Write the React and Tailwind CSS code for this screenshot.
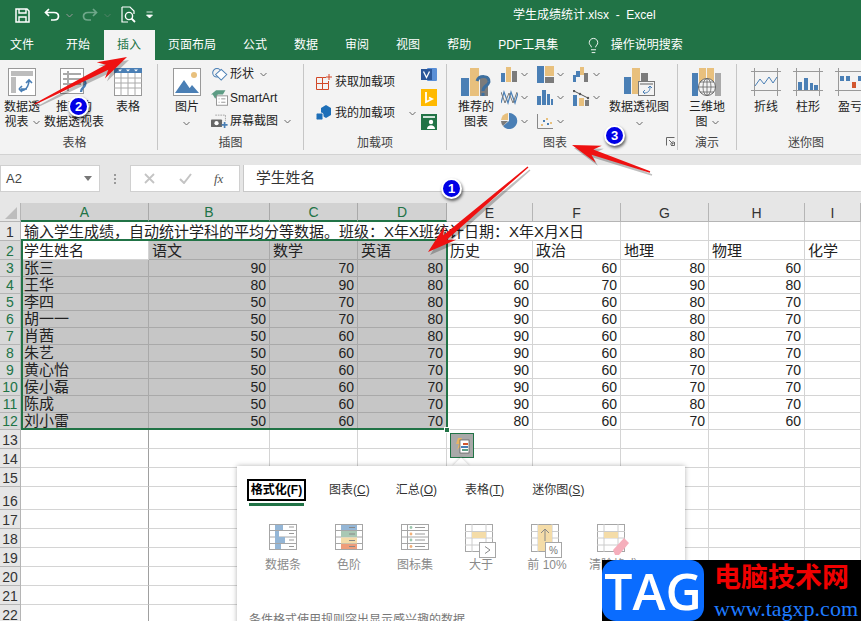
import { Lightbulb } from "lucide-react";

const BLUE = "#4a7fb5";
const TAN = "#e8c07d";
const GRAY = "#7b7b7b";
const LINE = "#a6a6a6";

const students = [
  ["张三", 90, 70, 80, 90, 60, 80, 60],
  ["王华", 80, 90, 80, 60, 70, 90, 80],
  ["李四", 50, 70, 80, 90, 60, 80, 70],
  ["胡一一", 50, 70, 80, 90, 60, 80, 70],
  ["肖茜", 50, 60, 80, 90, 60, 80, 70],
  ["朱艺", 50, 60, 70, 90, 60, 80, 70],
  ["黄心怡", 50, 60, 70, 90, 60, 70, 70],
  ["侯小磊", 50, 60, 70, 90, 60, 70, 70],
  ["陈成", 50, 60, 70, 90, 60, 80, 70],
  ["刘小雷", 50, 60, 70, 80, 60, 70, 60],
];

const Caret = ({ className = "" }) => (
  <svg width="7" height="5" viewBox="0 0 7 5" className={className}>
    <path d="M0.5 1 L3.5 4 L6.5 1" fill="none" stroke="#666" strokeWidth="1" />
  </svg>
);

const Svg = ({ w = 28, h = 28, vw, vh, children }) => (
  <svg width={w} height={h} viewBox={`0 0 ${vw || w} ${vh || h}`} className="shrink-0">
    {children}
  </svg>
);

/* ribbon icons */
const PivotIcon = () => (
  <Svg>
    <rect x="0.5" y="0.5" width="27" height="27" fill="#fff" stroke="#999" />
    <rect x="3" y="3" width="22" height="5" fill="#bdbdbd" />
    <rect x="3" y="9" width="5" height="16" fill="#bdbdbd" />
    <path d="M11 21 C14 24 20 22 21 13 M18 15 L21 12 L24 15 M19 21 L13 21 M11 21 L14 18 M11 21 L14 24" fill="none" stroke={BLUE} strokeWidth="1.6" />
  </Svg>
);
const RecPivotIcon = () => (
  <Svg>
    <rect x="0.5" y="0.5" width="23" height="25" fill="#fff" stroke="#999" />
    <path d="M3 6 H21 M3 11 H21 M3 16 H21 M8 3 V23" stroke="#aaa" strokeWidth="2" />
    <path d="M18 15 C22 10 27 13 25 17 C24 20 21 20 21 24" fill="none" stroke={BLUE} strokeWidth="2.4" />
  </Svg>
);
const TableIcon = () => (
  <Svg>
    <rect x="0.5" y="0.5" width="27" height="27" fill="#fff" stroke="#999" />
    <rect x="0" y="0" width="28" height="5" fill={BLUE} />
    <path d="M4 1.5 H8 L6 3.5 Z M12 1.5 H16 L14 3.5 Z M20 1.5 H24 L22 3.5 Z" fill="#fff" />
    <path d="M0 10 H28 M0 15 H28 M0 20 H28 M7 5 V28 M14 5 V28 M21 5 V28" stroke="#aaa" />
  </Svg>
);
const PictureIcon = () => (
  <Svg>
    <rect x="0.5" y="0.5" width="27" height="27" fill="#fff" stroke="#999" />
    <circle cx="21" cy="7" r="3" fill={TAN} />
    <path d="M2 25 L11 12 L20 25 Z M13 25 L19 17 L26 25 Z" fill={BLUE} />
  </Svg>
);
const ShapesIcon = () => (
  <Svg w={17} h={15} vw={20} vh={16}>
    <circle cx="7" cy="6" r="5" fill="none" stroke={BLUE} strokeWidth="1.2" />
    <path d="M12 2 L18.5 8 L12 14.5 L5.5 8 Z" fill="#fff" stroke={BLUE} strokeWidth="1.2" />
  </Svg>
);
const SmartArtIcon = () => (
  <Svg w={17} h={16} vw={20} vh={18}>
    <path d="M0 5 L6 0 H17 L14 5 Z M2 5 H8 L5 10 Z" fill="#5d9c84" />
    <rect x="6.5" y="6.5" width="13" height="11" fill="#fff" stroke="#888" />
    <path d="M9 10 H10 M12 10 H17 M9 14 H10 M12 14 H17" stroke="#888" />
  </Svg>
);
const ScreenshotIcon = () => (
  <Svg w={17} h={15} vw={20} vh={17}>
    <path d="M5 1 H17 V8" fill="none" stroke="#999" strokeDasharray="2 1" />
    <rect x="0" y="6" width="13" height="9" rx="1" fill="#666" />
    <circle cx="6.5" cy="10.5" r="2.5" fill="#fff" />
    <path d="M16 9 V16 M12.5 12.5 H19.5" stroke={BLUE} strokeWidth="2" />
  </Svg>
);
const StoreIcon = () => (
  <Svg w={16} h={16}>
    <path d="M0.5 3.5 H6.5 V9.5 H0.5 Z M6.5 9.5 H12.5 V15.5 H6.5 Z M0.5 9.5 H6.5 V15.5 H0.5 Z M6.5 3.5 H10 M12.5 7 V9.5" fill="none" stroke="#d24726" />
    <path d="M13 0 V6 M10 3 H16" stroke="#d24726" />
  </Svg>
);
const AddinIcon = () => (
  <Svg w={16} h={16}>
    <path d="M5 3 L10 0 L15 3 V10 L10 13 L5 10 Z" fill="#1e6fb8" />
    <rect x="0" y="8" width="7" height="7" rx="1.5" fill="#1e6fb8" stroke="#f3f3f3" />
  </Svg>
);
const VisioIcon = () => (
  <Svg w={16} h={13}>
    <rect x="6" y="0" width="10" height="13" rx="1" fill="#5a8fd6" />
    <rect x="0" y="1" width="11" height="11" fill="#2b579a" />
    <path d="M2.5 3.5 L5.5 9.5 L8.5 3.5" fill="none" stroke="#fff" strokeWidth="1.3" />
  </Svg>
);
const BingIcon = () => (
  <Svg w={16} h={17}>
    <rect width="16" height="17" fill="#ffb900" />
    <path d="M5 3 V13 L11 10 L8 8.5" fill="none" stroke="#fff" strokeWidth="1.8" />
  </Svg>
);
const PeopleIcon = () => (
  <Svg w={16} h={16}>
    <rect width="16" height="16" fill="#217346" />
    <rect x="2" y="2" width="12" height="2" fill="#cfe5da" />
    <circle cx="10" cy="8" r="2.2" fill="#fff" />
    <path d="M6 15 C6 10 14 10 14 15 Z" fill="#fff" />
  </Svg>
);
const ClusterIcon = ({ help, w = 30, h = 28 }) => (
  <Svg w={w} h={h}>
    <rect x="0" y="10" width="8" height="18" fill={BLUE} />
    <rect x="9" y="0" width="9" height="28" fill={TAN} />
    <rect x="19" y="8" width="8" height="20" fill={GRAY} />
    {help ? (
      <path d="M16 13 C18 7 29 7 28 14 C27 18 22 18 22 23 M22 25 V28" fill="none" stroke="#3d6f9f" strokeWidth="3" />
    ) : null}
  </Svg>
);
const PivotChartIcon = () => (
  <Svg w={31} h={28}>
    <rect x="0" y="9" width="7" height="17" fill={BLUE} />
    <rect x="8" y="0" width="8" height="26" fill={TAN} />
    <rect x="17" y="5" width="7" height="21" fill={GRAY} />
    <rect x="14.5" y="13.5" width="16" height="14" fill="#f3f3f3" stroke="#777" />
    <rect x="16" y="15" width="13" height="2" fill="#aaa" />
    <path d="M20 25 C24 25 26 23 26 19 M24 20 L26 18 L28 20 M19 24 L21 22 M19 24 L21 26" fill="none" stroke={BLUE} />
  </Svg>
);
const GlobeIcon = () => (
  <Svg w={30} h={28}>
    <rect x="0" y="5" width="6" height="23" fill={BLUE} />
    <rect x="7" y="0" width="7" height="20" fill={TAN} />
    <rect x="15" y="0" width="7" height="20" fill={TAN} />
    <rect x="23" y="5" width="6" height="23" fill="#a9a9a9" />
    <circle cx="15" cy="19" r="8.5" fill="#f3f3f3" stroke="#666" />
    <path d="M6.5 19 H23.5 M8 14 H22 M8 24 H22 M15 10.5 V27.5" stroke="#666" strokeWidth="0.8" />
    <ellipse cx="15" cy="19" rx="4" ry="8.5" fill="none" stroke="#666" strokeWidth="0.8" />
  </Svg>
);
const ColumnsSmall = () => (
  <Svg w={17} h={15}>
    <rect x="0" y="6" width="4" height="9" fill={BLUE} />
    <rect x="5" y="0" width="5" height="15" fill={TAN} />
    <rect x="11" y="4" width="5" height="11" fill={GRAY} />
  </Svg>
);
const LinesSmall = () => (
  <Svg w={17} h={15}>
    <path d="M0 13 L3 2 L7 13 L10 2 L14 13 L17 3" fill="none" stroke={BLUE} strokeWidth="1.2" />
    <path d="M0 2 L4 13 L8 3 L12 13 L16 2" fill="none" stroke={GRAY} strokeWidth="1" />
  </Svg>
);
const PieSmall = () => (
  <Svg w={17} h={16}>
    <path d="M8 8 L8 0 A8 8 0 1 1 2 13 Z" fill={BLUE} />
    <path d="M7 7 L7 0 A7.5 7.5 0 0 0 0 7 Z" fill={TAN} />
    <path d="M7 8 L0 8 A8 8 0 0 0 2 13 Z" fill={GRAY} />
  </Svg>
);
const TreemapSmall = () => (
  <Svg w={17} h={17}>
    <rect width="7" height="17" fill={BLUE} />
    <rect x="8" width="9" height="10" fill={TAN} />
    <rect x="8" y="11" width="9" height="6" fill={GRAY} />
  </Svg>
);
const BarsSmall = () => (
  <Svg w={16} h={15}>
    <rect x="0" y="6" width="4" height="9" fill={BLUE} />
    <rect x="5" y="0" width="4" height="15" fill={BLUE} />
    <rect x="10" y="4" width="3" height="11" fill={BLUE} />
    <rect x="14" y="9" width="2" height="6" fill={BLUE} />
  </Svg>
);
const ScatterSmall = () => (
  <Svg w={16} h={15}>
    <path d="M0.5 0 V14.5 H16" fill="none" stroke="#888" />
    <path d="M4 10 h2 v2 h-2 Z M9 4 h2 v2 h-2 Z M13 8 h2 v2 h-2 Z" fill={TAN} />
    <path d="M6 6 h2 v2 h-2 Z M10 9 h2 v2 h-2 Z" fill={BLUE} />
  </Svg>
);
const WaterfallSmall = () => (
  <Svg w={16} h={15}>
    <rect x="0" y="8" width="3" height="7" fill={BLUE} />
    <rect x="3" y="4" width="4" height="6" fill={BLUE} />
    <rect x="7" y="0" width="4" height="8" fill={TAN} />
    <rect x="11" y="6" width="4" height="9" fill={GRAY} />
  </Svg>
);
const ComboSmall = () => (
  <Svg w={17} h={16}>
    <rect x="0" y="5" width="4" height="11" fill={BLUE} />
    <rect x="6" y="8" width="5" height="8" fill={TAN} />
    <rect x="12" y="10" width="4" height="6" fill={GRAY} />
    <path d="M1 1 L7 4 L15 8" fill="none" stroke="#555" />
    <circle cx="1" cy="1" r="1.2" fill="#555" />
    <circle cx="7" cy="4" r="1.2" fill="#555" />
    <circle cx="15" cy="8" r="1.2" fill="#555" />
  </Svg>
);
const SparkFrame = ({ children }) => (
  <Svg w={30} h={28}>
    <path d="M0 3.5 H30 M0 22.5 H30 M3.5 0 V28 M26.5 0 V28" stroke="#999" />
    {children}
  </Svg>
);

/* quick analysis icons, all greyed out */
const PopGrid = ({ w = 28, h = 26, lines = "M0 6.5 H28 M0 13 H28 M0 19.5 H28", children }) => (
  <svg width={w} height={h} viewBox={`0 0 ${w} ${h}`}>
    <rect x="0.5" y="0.5" width="27" height="25" fill="#fff" stroke={LINE} />
    <path d={lines} stroke={LINE} />
    {children}
  </svg>
);
const dashes = "M20 3 H25 M20 9.5 H25 M20 16 H25 M20 22.5 H25";
const popIcons = [
  <PopGrid key="bar">
    <path d="M6 1 H14 V6 H6 Z M6 7 H10 V13 H6 Z M6 13 H16 V19 H6 Z M6 20 H12 V25 H6 Z" fill="#94b6d6" />
    <path d={dashes} stroke="#999" />
  </PopGrid>,
  <PopGrid key="scale">
    <rect x="6" y="1" width="16" height="5" fill="#94b6d6" />
    <rect x="6" y="7" width="16" height="6" fill="#a9c8b4" />
    <rect x="6" y="13.5" width="16" height="6" fill="#f4dca8" />
    <rect x="6" y="20" width="16" height="5" fill="#ee9d7a" />
    <path d="M14 3.5 H20 M14 10 H20 M14 16.5 H20 M14 22.5 H20" stroke="#888" />
  </PopGrid>,
  <PopGrid key="set" lines="M0 6.5 H28 M0 13 H28 M0 19.5 H28 M6.5 0 V26">
    <circle cx="10" cy="3.5" r="1.4" fill="#9cc7ad" />
    <circle cx="10" cy="10" r="1.4" fill="#f2b078" />
    <circle cx="10" cy="16" r="1.4" fill="#9cc7ad" />
    <circle cx="10" cy="22.5" r="1.4" fill="#f2b078" />
    <path d="M14 3.5 H24 M14 10 H24 M14 16 H24 M14 22.5 H24" stroke="#999" />
  </PopGrid>,
];
const CalloutGrid = ({ children }) => (
  <svg width="32" height="36" viewBox="0 0 32 36" className="-mb-2.5">
    <rect x="0.5" y="0.5" width="27" height="27" fill="#fff" stroke={LINE} />
    <path d="M0 7.5 H28 M0 14 H28 M0 21 H28 M7 0 V28 M21 0 V28" stroke="#ccc" />
    {children}
  </svg>
);

const Big = ({ w, icon, lines, caret, className = "" }) => (
  <div className={`flex shrink-0 flex-col items-center pt-1 ${w} ${className}`}>
    <div className="flex h-7 items-center">{icon}</div>
    <div className="mt-[4px] flex flex-col items-center whitespace-nowrap leading-[15px]">
      {lines.map((l, i) => (
        <span key={l} className="flex items-center gap-1">
          {l}
          {caret && lines.length > 1 && i === lines.length - 1 ? <Caret /> : null}
        </span>
      ))}
      {caret && lines.length === 1 ? <Caret className="mt-1.5" /> : null}
    </div>
  </div>
);

const SmallChart = ({ icon }) => (
  <div className="flex h-5 w-9 items-center">
    <div className="flex w-[20px] shrink-0 items-center">{icon}</div>
    <Caret />
  </div>
);

const Group = ({ w, label, labelClass = "", border = true, children, launcher }) => (
  <div className={`my-1 flex shrink-0 flex-col ${w} ${border ? "border-r border-[#c6c6c6]" : ""}`}>
    <div className="flex flex-1">{children}</div>
    <div className={`relative h-3.5 text-center leading-[14px] text-[#444] ${labelClass}`}>
      {label}
      {launcher ? (
        <svg width="9" height="9" viewBox="0 0 9 9" className="absolute right-[2px] top-[1px]">
          <path d="M0.5 8.5 V0.5 H8.5 M3 3 L7 7 M7 4 V7 H4 M8.5 5 V8.5 H5" fill="none" stroke="#666" />
        </svg>
      ) : null}
    </div>
  </div>
);

const SelCell = ({ children }) => (
  <div className="flex items-end justify-end overflow-hidden border-r border-b border-[#a9a9a9] bg-[#c6c6c6] pr-[3px] text-[14px] leading-[16px]">
    {children}
  </div>
);
const NumCell = ({ children }) => (
  <div className="flex items-end justify-end overflow-hidden border-r border-b border-[#d4d4d4] pr-[3px] text-[14px] leading-[16px]">
    {children}
  </div>
);
const TextCell = ({ sel, children }) => (
  <div className={`flex items-end overflow-hidden whitespace-nowrap border-r border-b pl-[3px] text-[15px] leading-[16px] ${sel ? "border-[#a9a9a9] bg-[#c6c6c6]" : "border-[#d4d4d4]"}`}>
    {children}
  </div>
);
const Blank = ({ first }) => (
  <div className={`border-r border-b border-[#d4d4d4] ${first ? "border-r-[#a0a0a0]" : ""}`} />
);
const RowHead = ({ n, sel, h }) => (
  <div className={`flex items-end justify-center border-r border-b border-[#b5b5b5] text-[14px] leading-[16px] ${h} ${sel ? "bg-[#d8d8d8] text-[#217346]" : "bg-[#e6e6e6] text-[#333]"}`}>
    {n}
  </div>
);
const ColHead = ({ n, sel }) => (
  <div className={`flex h-[19px] items-end justify-center border-r text-[14px] leading-[15px] ${sel ? "border-b-2 border-r-[#a9a9a9] border-b-[#217346] bg-[#d2d2d2] text-[#217346]" : "border-b border-r-[#b5b5b5] border-b-[#b5b5b5] bg-[#e6e6e6] text-[#333]"}`}>
    {n}
  </div>
);

const Badge = ({ n, className }) => (
  <div className={`absolute flex h-[21px] w-[21px] items-center justify-center rounded-full border-2 border-white bg-[#0000e6] text-[13px] font-bold text-white shadow-[1px_2px_3px_rgba(0,0,0,0.6)] ${className}`}>
    {n}
  </div>
);

// tapered arrow, thin at the tail
const arrowPoints = (x1, y1, x2, y2, len, wing) => {
  const d = Math.hypot(x2 - x1, y2 - y1);
  const ux = (x2 - x1) / d;
  const uy = (y2 - y1) / d;
  const nx = -uy;
  const ny = ux;
  const p = (along, side) => `${x2 - ux * along + nx * side},${y2 - uy * along + ny * side}`;
  return [
    `${x1 + nx * 0.7},${y1 + ny * 0.7}`,
    p(len * 0.8, 2.8),
    p(len * 1.05, wing),
    `${x2},${y2}`,
    p(len * 1.05, -wing),
    p(len * 0.8, -2.8),
    `${x1 - nx * 0.7},${y1 - ny * 0.7}`,
  ].join(" ");
};

const Arrows = () => (
  <svg width="861" height="621" viewBox="0 0 861 621" className="pointer-events-none absolute left-0 top-0">
    {[
      arrowPoints(35, 104, 127, 57, 28, 9),
      arrowPoints(650, 172, 572, 145, 27, 9),
      arrowPoints(528, 167, 428, 252, 28, 9),
    ].map((pts) => (
      <g key={pts}>
        <polygon points={pts} fill="#000" opacity="0.25" transform="translate(2 3)" />
        <polygon points={pts} fill="#ee1111" />
      </g>
    ))}
  </svg>
);

const App = () => {
  return (
    <div className="relative h-[621px] w-[861px] overflow-hidden bg-white font-['Liberation_Sans','Noto_Sans_CJK_SC',sans-serif] text-[12px] text-[#222]">
      {/* title bar */}
      <div className="flex h-[30px] items-center bg-[#217346] text-white">
        <div className="ml-[15px] flex w-[498px] items-center">
          <svg width="15" height="15" viewBox="0 0 15 15">
            <path d="M1 1 H12 L14 3 V14 H1 Z" fill="none" stroke="#fff" strokeWidth="1.5" />
            <path d="M4 1 V5 H11 V1 M4 14 V9 H11 V14" fill="none" stroke="#fff" strokeWidth="1.4" />
          </svg>
          <svg width="16" height="14" viewBox="0 0 16 14" className="ml-[14px]">
            <path d="M5 1 L1.5 4.5 L5 8 M2 4.5 H10 C16 4.5 16 12 10 12 H7" fill="none" stroke="#fff" strokeWidth="1.7" />
          </svg>
          <Caret className="ml-[6px] invert" />
          <svg width="16" height="14" viewBox="0 0 16 14" className="ml-[9px]">
            <path d="M11 1 L14.5 4.5 L11 8 M14 4.5 H6 C0 4.5 0 12 6 12 H9" fill="none" stroke="#6fa78a" strokeWidth="1.7" />
          </svg>
          <Caret className="ml-[6px] opacity-40 invert" />
          <svg width="15" height="18" viewBox="0 0 15 18" className="ml-[10px]">
            <path d="M1 1 H9 L13 5 V8 M7 16 H1 V1" fill="none" stroke="#fff" strokeWidth="1.2" />
            <circle cx="8" cy="10" r="3.6" fill="none" stroke="#fff" strokeWidth="1.4" />
            <path d="M10.5 12.5 L14 16" stroke="#fff" strokeWidth="1.8" />
          </svg>
          <svg width="7" height="8" viewBox="0 0 7 8" className="ml-[10px]">
            <path d="M0.5 1 H6.5 M0.5 4 H6.5 L3.5 7 Z" fill="#fff" stroke="#fff" strokeWidth="0.8" />
          </svg>
        </div>
        <div className="whitespace-pre">学生成绩统计.xlsx  -  Excel</div>
      </div>

      {/* tabs */}
      <div className="flex h-[30px] items-center bg-[#217346] text-white">
        <div className="pl-2.5 pr-[18.5px]">文件</div>
        <div className="px-[13.5px]">开始</div>
        <div className="flex h-full items-center bg-[#f3f3f3] px-[13.5px] text-[#217346]">插入</div>
        <div className="px-[13.5px]">页面布局</div>
        <div className="px-[13.5px]">公式</div>
        <div className="px-[13.5px]">数据</div>
        <div className="px-[13.5px]">审阅</div>
        <div className="px-[13.5px]">视图</div>
        <div className="px-[13.5px]">帮助</div>
        <div className="px-[13.5px]">PDF工具集</div>
        <Lightbulb size={17} strokeWidth={1.3} className="ml-[13px]" />
        <div className="ml-[9px]">操作说明搜索</div>
      </div>

      {/* ribbon */}
      <div className="flex h-[95px] border-b border-[#d2d2d2] bg-[#f3f3f3]">
        <Group w="w-[158px]" label="表格" labelClass="pr-2">
          <Big w="w-[44px]" icon={<PivotIcon />} lines={["数据透", "视表"]} caret />
          <Big w="w-[60px]" icon={<RecPivotIcon />} lines={["推荐的", "数据透视表"]} />
          <Big w="w-[48px]" icon={<TableIcon />} lines={["表格"]} />
        </Group>
        <Group w="w-[146px]" label="插图">
          <Big w="w-[48px]" className="ml-[5px]" icon={<PictureIcon />} lines={["图片"]} caret />
          <div className="flex flex-col gap-[3.5px]">
            <div className="flex h-5 items-center gap-[2px]"><ShapesIcon />形状<Caret className="ml-1" /></div>
            <div className="flex h-5 items-center gap-[2px]"><SmartArtIcon />SmartArt</div>
            <div className="flex h-5 items-center gap-[2px]"><ScreenshotIcon />屏幕截图<Caret className="ml-1" /></div>
          </div>
        </Group>
        <Group w="w-[143px]" label="加载项">
          <div className="flex w-[117px] flex-col gap-[15px] pl-3 pt-2.5">
            <div className="flex h-4 items-center gap-[3px]"><StoreIcon />获取加载项</div>
            <div className="flex h-4 items-center gap-[3px]"><AddinIcon />我的加载项<Caret className="ml-[11px]" /></div>
          </div>
          <div className="flex flex-col gap-2 pt-1">
            <VisioIcon />
            <BingIcon />
            <PeopleIcon />
          </div>
        </Group>
        <Group w="w-[231px]" label="图表" labelClass="pr-3.5" launcher>
          <Big w="w-[50px]" className="ml-[4px]" icon={<ClusterIcon help />} lines={["推荐的", "图表"]} />
          <div className="flex flex-col gap-[3.5px]">
            <SmallChart icon={<ColumnsSmall />} />
            <SmallChart icon={<LinesSmall />} />
            <SmallChart icon={<PieSmall />} />
          </div>
          <div className="flex flex-col gap-[3.5px]">
            <SmallChart icon={<TreemapSmall />} />
            <SmallChart icon={<BarsSmall />} />
            <SmallChart icon={<ScatterSmall />} />
          </div>
          <div className="flex flex-col gap-[3.5px]">
            <SmallChart icon={<WaterfallSmall />} />
            <SmallChart icon={<ComboSmall />} />
          </div>
          <Big w="w-[60px]" icon={<PivotChartIcon />} lines={["数据透视图"]} caret />
        </Group>
        <Group w="w-[59px]" label="演示">
          <Big w="w-[58px]" icon={<GlobeIcon />} lines={["三维地", "图"]} caret />
        </Group>
        <Group w="w-[138px]" label="迷你图" border={false}>
          <Big
            w="w-[42px]"
            className="ml-2"
            lines={["折线"]}
            icon={
              <SparkFrame>
                <path d="M4 18 L9 11 L13 16 L18 9 L22 15 L26 9" fill="none" stroke={BLUE} />
              </SparkFrame>
            }
          />
          <Big
            w="w-[42px]"
            lines={["柱形"]}
            icon={
              <SparkFrame>
                <path d="M5 14 h4 v8 h-4 Z M11 10 h4 v12 h-4 Z M17 15 h3 v7 h-3 Z M21 17 h4 v5 h-4 Z" fill={BLUE} />
              </SparkFrame>
            }
          />
          <Big
            w="w-[42px]"
            lines={["盈亏"]}
            icon={
              <SparkFrame>
                <path d="M5 8 h4 v5 h-4 Z M11 8 h4 v5 h-4 Z M23 8 h3 v5 h-3 Z" fill={BLUE} />
                <path d="M17 14 h4 v6 h-4 Z" fill="#d2572f" />
              </SparkFrame>
            }
          />
        </Group>
      </div>

      {/* formula bar */}
      <div className="flex h-[48px] items-start bg-[#e6e6e6] pt-2.5">
        <div className="flex h-[27px] w-[100px] items-center justify-between border border-[#d0d0d0] bg-white pl-[5px] pr-[7px] text-[13px] text-[#444]">
          A2
          <svg width="8" height="5" viewBox="0 0 8 5"><path d="M0 0 H8 L4 5 Z" fill="#777" /></svg>
        </div>
        <div className="flex h-[27px] w-[30px] flex-col items-center justify-center gap-[2px]">
          <span className="h-[2px] w-[2px] bg-[#999]" />
          <span className="h-[2px] w-[2px] bg-[#999]" />
          <span className="h-[2px] w-[2px] bg-[#999]" />
        </div>
        <div className="flex h-[27px] w-[110px] items-center border border-[#d0d0d0] bg-white text-[#bbb]">
          <svg width="11" height="11" viewBox="0 0 11 11" className="ml-[13px]"><path d="M1 1 L10 10 M10 1 L1 10" stroke="#c4c4c4" strokeWidth="1.8" /></svg>
          <svg width="13" height="11" viewBox="0 0 13 11" className="ml-[24px]"><path d="M1 6 L5 10 L12 1" fill="none" stroke="#c4c4c4" strokeWidth="2" /></svg>
          <span className="ml-[22px] font-['Liberation_Serif',serif] text-[13px] italic text-[#555]">fx</span>
        </div>
        <div className="ml-[3px] flex h-[27px] flex-1 items-center border-b border-l border-[#c8c8c8] bg-white pl-3 text-[14.8px] text-[#333]">
          学生姓名
        </div>
      </div>

      {/* sheet */}
      <div className="grid grid-cols-[21px_128px_121px_88px_89px_86px_88px_88px_96px_56px]">
        <div className="flex h-[19px] items-end justify-end border-r border-b border-[#b5b5b5] bg-[#e6e6e6] pb-[2px] pr-[3px]">
          <svg width="12" height="12" viewBox="0 0 12 12"><path d="M12 0 V12 H0 Z" fill="#bdbdbd" /></svg>
        </div>
        <ColHead n="A" sel />
        <ColHead n="B" sel />
        <ColHead n="C" sel />
        <ColHead n="D" sel />
        <ColHead n="E" />
        <ColHead n="F" />
        <ColHead n="G" />
        <ColHead n="H" />
        <ColHead n="I" />

        <RowHead n={1} h="h-[19px]" />
        <div className="col-span-6 flex items-end whitespace-nowrap border-r border-b border-[#d4d4d4] pl-[3px] text-[15px] leading-[16px]">
          输入学生成绩，自动统计学科的平均分等数据。班级：X年X班统计日期：X年X月X日
        </div>
        <Blank />
        <Blank />
        <Blank />

        <RowHead n={2} sel h="h-[19px]" />
        <TextCell>学生姓名</TextCell>
        <TextCell sel>语文</TextCell>
        <TextCell sel>数学</TextCell>
        <TextCell sel>英语</TextCell>
        <TextCell>历史</TextCell>
        <TextCell>政治</TextCell>
        <TextCell>地理</TextCell>
        <TextCell>物理</TextCell>
        <TextCell>化学</TextCell>

        {students.map((s, i) => (
          <div key={s[0]} className="contents">
            <RowHead n={i + 3} sel h="h-[17px]" />
            <TextCell sel>{s[0]}</TextCell>
            <SelCell>{s[1]}</SelCell>
            <SelCell>{s[2]}</SelCell>
            <SelCell>{s[3]}</SelCell>
            <NumCell>{s[4]}</NumCell>
            <NumCell>{s[5]}</NumCell>
            <NumCell>{s[6]}</NumCell>
            <NumCell>{s[7]}</NumCell>
            <Blank />
          </div>
        ))}

        {[13, 14, 15, 16, 17, 18, 19, 20, 21, 22].map((n) => (
          <div key={n} className="contents">
            <RowHead n={n} h={n === 16 ? "h-[23px]" : "h-[19px]"} />
            <Blank first />
            <Blank />
            <Blank />
            <Blank />
            <Blank />
            <Blank />
            <Blank />
            <Blank />
            <Blank />
          </div>
        ))}
      </div>

      {/* selection frame */}
      <div className="pointer-events-none absolute left-[21px] top-[239px] h-[191px] w-[427px] border-2 border-[#217346]" />
      <div className="absolute left-[444px] top-[427px] h-[6px] w-[6px] border border-white bg-[#217346]" />

      {/* quick analysis button */}
      <div className="absolute left-[450px] top-[433px] flex h-[25px] w-[24px] items-center justify-center border border-[#217346] bg-[#a9a9a9]">
        <svg width="16" height="16" viewBox="0 0 16 16">
          <path d="M4 0 H8 L6 5 H9 L3 12 L5 6 H2 Z" fill="#e8b563" />
          <rect x="6" y="2" width="9" height="13" fill="#fff" stroke="#555" strokeWidth="0.7" />
          <rect x="9" y="5" width="5" height="2" fill="#d2572f" />
          <rect x="7" y="8" width="7" height="2" fill={BLUE} />
          <rect x="8" y="11" width="6" height="2" fill="#5d9c84" />
        </svg>
      </div>

      {/* quick analysis popup */}
      <div className="absolute left-[455px] top-[460px] h-3 w-3 rotate-45 bg-white shadow-[-1px_-1px_2px_rgba(0,0,0,0.12)]" />
      <div className="absolute left-[237px] top-[466px] h-[170px] w-[448px] bg-white shadow-[0_0_5px_rgba(0,0,0,0.3)]">
        <div className="ml-3 mt-[15px] flex h-[25px] items-start text-[12px] text-[#333]">
          <div className="flex w-[55px] flex-col">
            <span className="whitespace-nowrap text-center font-bold leading-[18px] text-black outline-2 outline-black">格式化(F)</span>
            <span className="mt-1 h-[3px] bg-[#217346]" />
          </div>
          <span className="ml-[25px] leading-[18px]">图表(<u>C</u>)</span>
          <span className="ml-[26px] leading-[18px]">汇总(<u>O</u>)</span>
          <span className="ml-[28px] leading-[18px]">表格(<u>T</u>)</span>
          <span className="ml-[28px] leading-[18px]">迷你图(<u>S</u>)</span>
        </div>
        <div className="ml-[13px] mt-[18px] flex text-[12px] text-[#8a8a8a]">
          <div className="flex w-[66px] flex-col items-center gap-[7px] leading-4">{popIcons[0]}数据条</div>
          <div className="flex w-[66px] flex-col items-center gap-[7px] leading-4">{popIcons[1]}色阶</div>
          <div className="flex w-[66px] flex-col items-center gap-[7px] leading-4">{popIcons[2]}图标集</div>
          <div className="flex w-[66px] flex-col items-center gap-[7px] leading-4">
            <CalloutGrid>
              <rect x="7" y="8" width="14" height="6" fill="#f4dca8" />
              <rect x="14.5" y="18.5" width="16" height="15" fill="#fff" stroke={LINE} />
              <path d="M20 22.5 L25 26 L20 29.5" fill="none" stroke="#888" />
            </CalloutGrid>
            大于
          </div>
          <div className="flex w-[66px] flex-col items-center gap-[7px] leading-4">
            <CalloutGrid>
              <rect x="7" y="1" width="14" height="26" fill="#f4dca8" />
              <path d="M14 17 V5 M10 9 L14 5 L18 9" fill="none" stroke="#888" />
              <rect x="14.5" y="18.5" width="16" height="15" fill="#fff" stroke={LINE} />
              <text x="22.5" y="30" textAnchor="middle" fontSize="10" fill="#777">%</text>
            </CalloutGrid>
            前 10%
          </div>
          <div className="flex w-[66px] flex-col items-center gap-[7px] leading-4">
            <CalloutGrid>
              <rect x="7" y="8" width="14" height="6" fill="#f4dca8" />
              <path d="M16 26 L27 14 L32 19 L22 31 L18 31 Z" fill="#f5aebb" />
            </CalloutGrid>
            清除格式
          </div>
        </div>
        <div className="ml-3 mt-[38px] whitespace-nowrap text-[#777]">条件格式使用规则突出显示感兴趣的数据</div>
      </div>

      <Arrows />
      <Badge n="1" className="left-[441px] top-[178px]" />
      <Badge n="2" className="left-[68px] top-[96px]" />
      <Badge n="3" className="left-[604px] top-[125px]" />

      {/* watermark */}
      <div className="absolute left-[602px] top-[560px] flex h-[61px] w-[259px] bg-black">
        <div className="flex w-[102px] items-center justify-center rounded-[14px] bg-[#0a6cff] font-['Open_Sans',sans-serif] text-[50px] font-semibold leading-none text-white">
          TAG
        </div>
        <div className="ml-[10px] flex flex-col">
          <div className="mt-[2px] whitespace-nowrap text-[27px] font-bold leading-[32px] text-[#f00000]">电脑技术网</div>
          <div className="mt-[4px] whitespace-nowrap font-['Liberation_Serif',serif] text-[22px] leading-[22px] text-[#1f7bff]">www.tagxp.com</div>
        </div>
      </div>
    </div>
  );
};

export default App;
